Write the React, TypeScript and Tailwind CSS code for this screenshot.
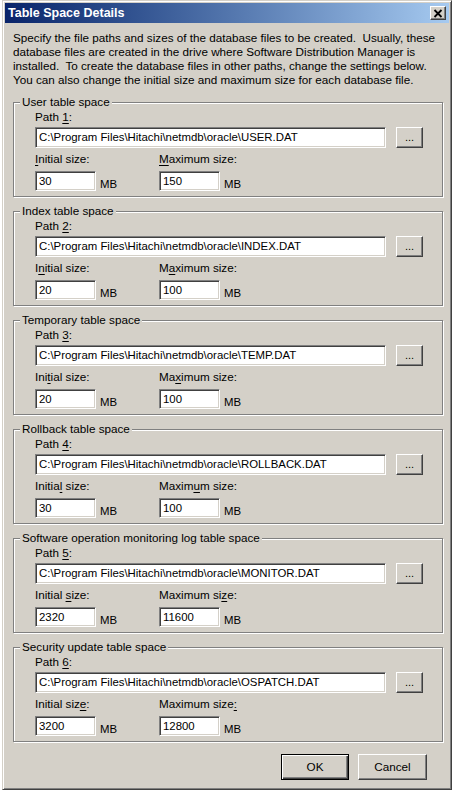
import React from "react";

const groups = [
  { title: "User table space", file: "USER.DAT", init: "30", max: "150", iu: 0, mu: 0 },
  { title: "Index table space", file: "INDEX.DAT", init: "20", max: "100", iu: 1, mu: 1 },
  { title: "Temporary table space", file: "TEMP.DAT", init: "20", max: "100", iu: 3, mu: 2 },
  { title: "Rollback table space", file: "ROLLBACK.DAT", init: "30", max: "100", iu: 6, mu: 5 },
  { title: "Software operation monitoring log table space", file: "MONITOR.DAT", init: "2320", max: "11600", iu: 8, mu: 10 },
  { title: "Security update table space", file: "OSPATCH.DAT", init: "3200", max: "12800", iu: 11, mu: 12 },
];

const lines = [
  "Specify the file paths and sizes of the database files to be created.  Usually, these",
  "database files are created in the drive where Software Distribution Manager is",
  "installed.  To create the database files in other paths, change the settings below.",
  "You can also change the initial size and maximum size for each database file.",
];

const sunken =
  "bg-white border border-t-[#808080] border-l-[#808080] border-r-white border-b-white shadow-[inset_1px_1px_0_#404040,inset_-1px_-1px_0_#d4d0c8]";
const raised =
  "bg-[#d4d0c8] border border-t-white border-l-white border-r-[#404040] border-b-[#404040] shadow-[inset_-1px_-1px_0_#808080,inset_1px_1px_0_#d4d0c8]";

// label with an underlined access key
function Mn({ text, i }: { text: string; i: number }) {
  return (
    <span className="whitespace-pre">
      {text.slice(0, i)}
      <span className="underline underline-offset-2">{text[i]}</span>
      {text.slice(i + 1)}
    </span>
  );
}

function SizeField({ label, i, value }: { label: string; i: number; value: string }) {
  return (
    <div className="flex flex-col">
      <div className="leading-[14px] h-[14px]">
        <Mn text={label} i={i} />
      </div>
      <div className="flex items-end mt-[5px]">
        <div className={`${sunken} w-[61px] h-[20px] pl-[3px] leading-[18px] text-[11.4px]`}>{value}</div>
        <span className="ml-[4px] leading-[13px] text-[11.4px]">MB</span>
      </div>
    </div>
  );
}

export default function App() {
  return (
    <div className="w-[456px] h-[795px] bg-white pl-[2px] font-['Liberation_Sans',Arial,sans-serif] text-[11.7px] text-black">
      <div className="w-[450px] h-[790px] p-[2px] bg-[#d4d0c8] border border-t-[#d4d0c8] border-l-[#d4d0c8] border-r-[#404040] border-b-[#404040] shadow-[inset_1px_1px_0_#fff,inset_-1px_-1px_0_#808080] flex flex-col">
        {/* title bar */}
        <div className="h-[20px] flex items-center justify-between bg-gradient-to-r from-[#0a246a] to-[#a6caf0] pl-[3px] pr-[3px]">
          <span className="text-white font-bold text-[12.5px] leading-none">Table Space Details</span>
          <div className={`${raised} w-[16px] h-[14px] flex items-center justify-center`}>
            <svg width="10" height="9" viewBox="0 0 10 9">
              <path d="M1.5 1 L8.5 8 M8.5 1 L1.5 8" stroke="#000" strokeWidth="1.8" fill="none" />
            </svg>
          </div>
        </div>

        <div className="pl-[8px] pr-[6px] pt-[8px] flex flex-col">
          <div className="leading-[14px]">
            {lines.map((l) => (
              <div key={l} className="whitespace-pre">{l}</div>
            ))}
          </div>

          <div className="flex flex-col gap-[7px] mt-[8px]">
            {groups.map((g, n) => (
              <fieldset
                key={g.title}
                className="border border-[#808080] shadow-[inset_1px_1px_0_#fff,1px_1px_0_#fff]"
              >
                <legend className="ml-[6px] px-[2px] leading-[14px] bg-[#d4d0c8]">{g.title}</legend>
                <div className="pl-[21px] pt-[1px] pb-[5px]">
                  <div className="leading-[14px] h-[14px]">
                    <Mn text={`Path ${n + 1}:`} i={5} />
                  </div>
                  <div className="flex mt-[3px]">
                    <div className={`${sunken} w-[351px] h-[21px] pl-[3px] leading-[19px] whitespace-pre text-[11.4px]`}>
                      {"C:\\Program Files\\Hitachi\\netmdb\\oracle\\" + g.file}
                    </div>
                    <div className={`${raised} ml-[10px] w-[27px] h-[21px] flex items-center justify-center leading-none text-[11px]`}>
                      ...
                    </div>
                  </div>
                  <div className="flex mt-[4px]">
                    <div className="w-[124px]">
                      <SizeField label="Initial size:" i={g.iu} value={g.init} />
                    </div>
                    <SizeField label="Maximum size:" i={g.mu} value={g.max} />
                  </div>
                </div>
              </fieldset>
            ))}
          </div>

          <div className="flex justify-end gap-[9px] mt-[12px] pr-[16px]">
            <div className="w-[68px] h-[26px] flex items-center justify-center bg-[#d4d0c8] border border-black shadow-[inset_1px_1px_0_#fff,inset_-1px_-1px_0_#404040,inset_-2px_-2px_0_#808080]">
              OK
            </div>
            <div className={`${raised} w-[69px] h-[26px] flex items-center justify-center`}>Cancel</div>
          </div>
        </div>
      </div>
    </div>
  );
}
